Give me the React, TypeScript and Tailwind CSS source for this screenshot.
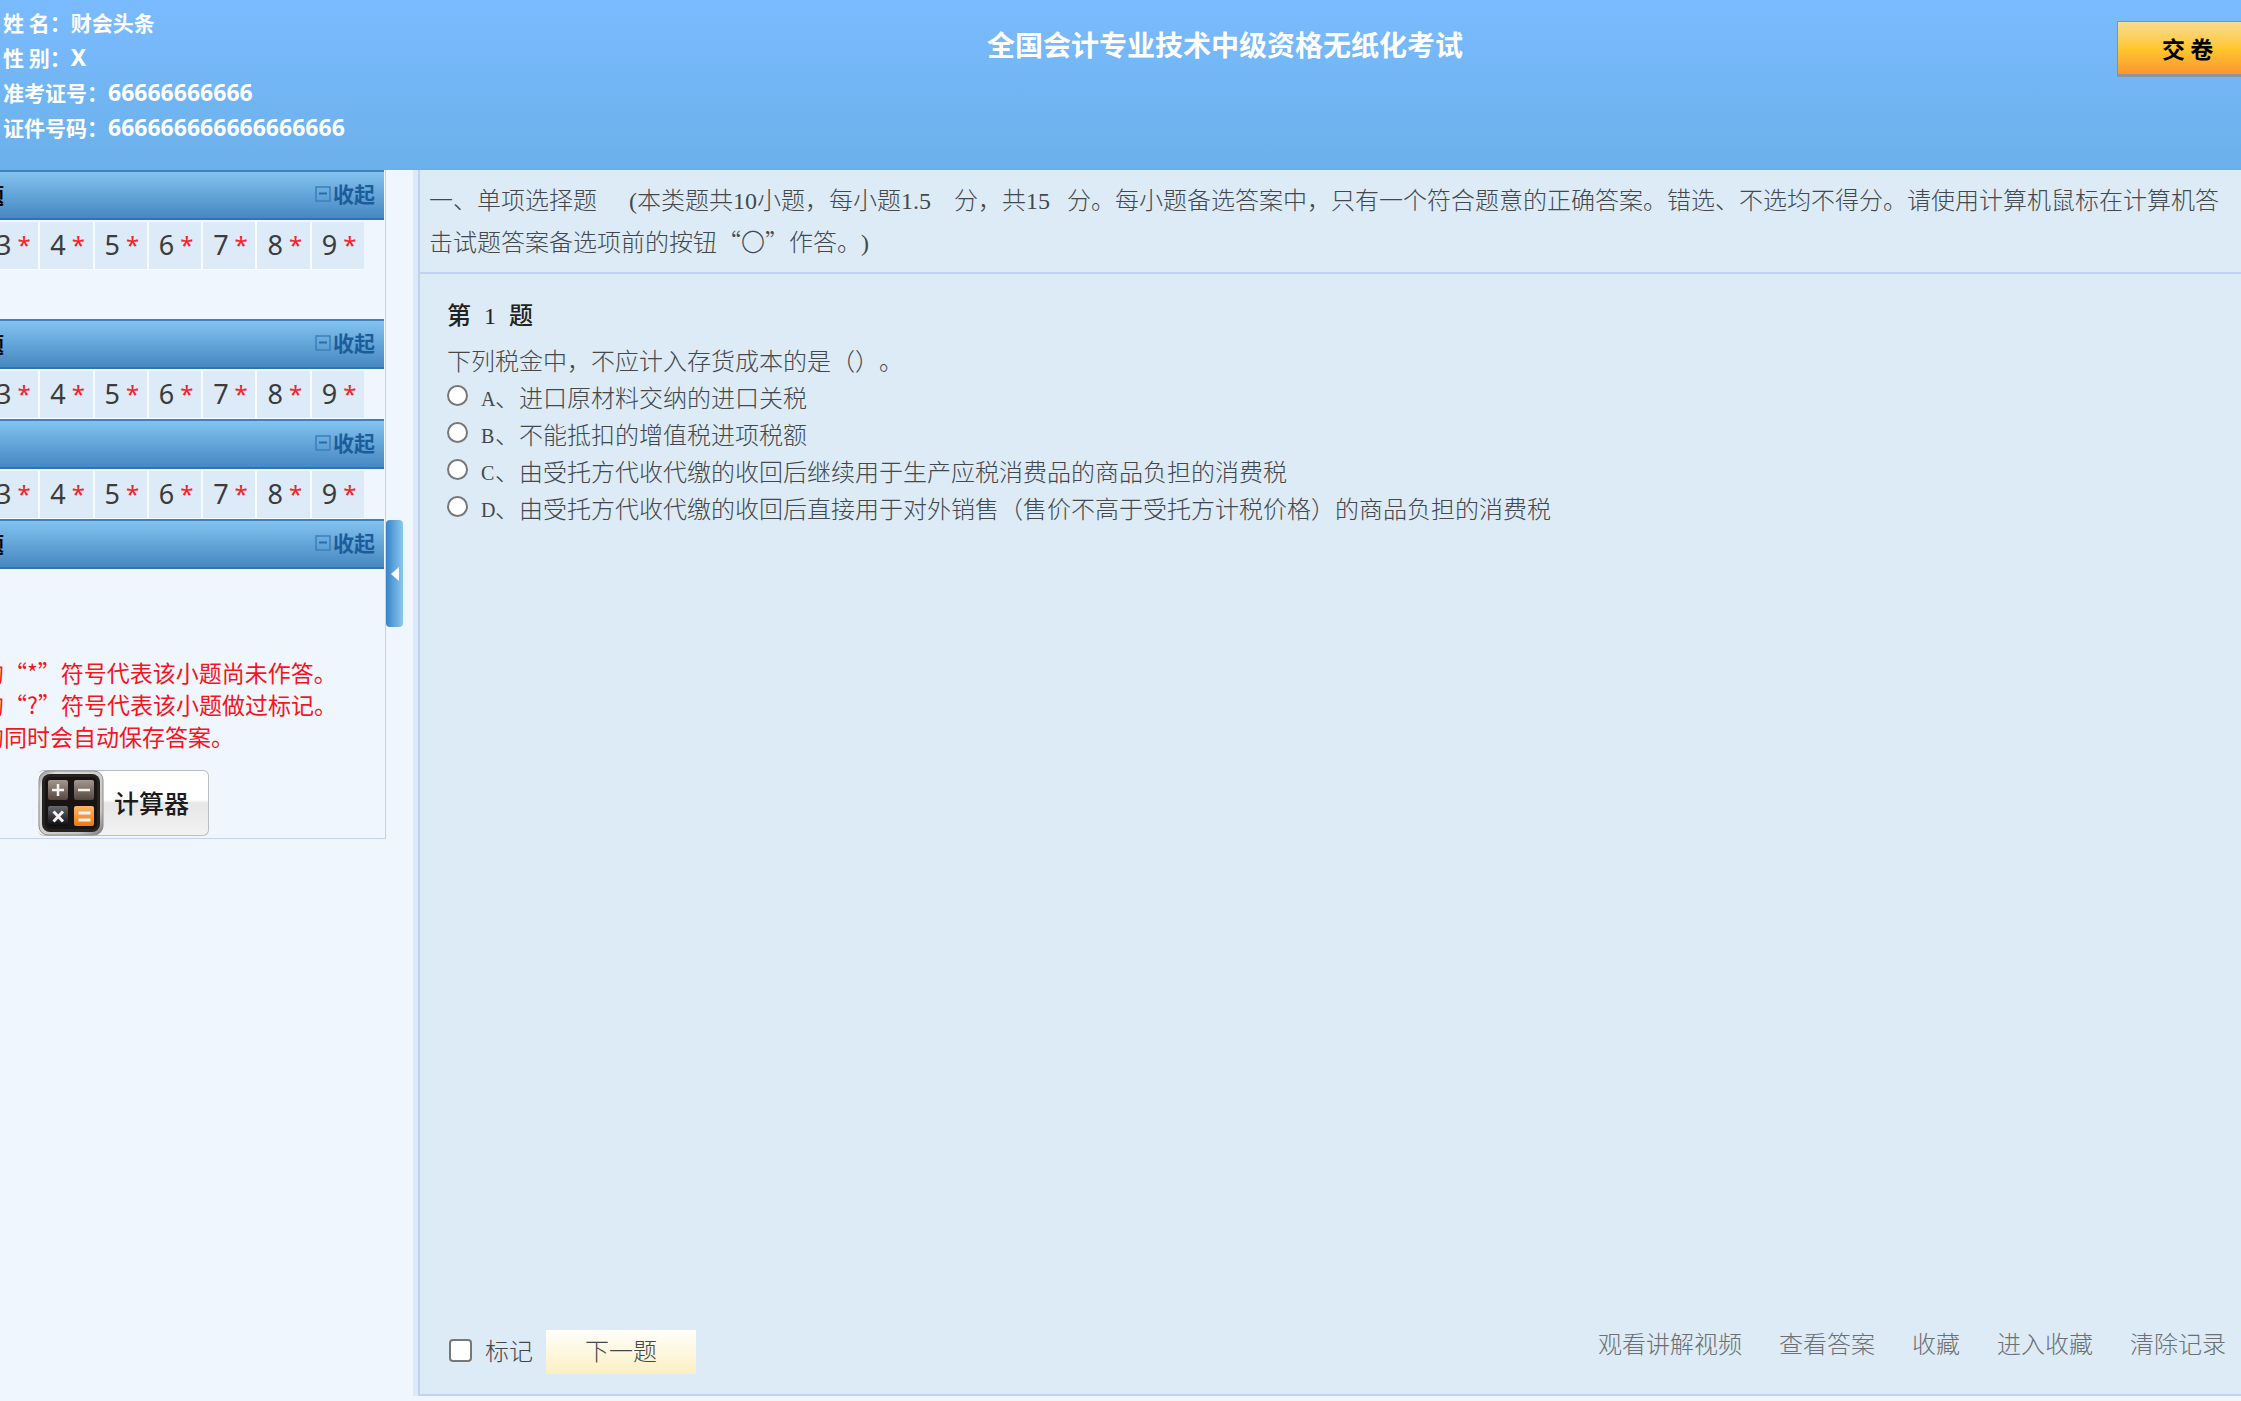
import { useState } from "react";

interface Section {
  id: string;
  title: string;
  numbers: number[];
  spaced?: boolean;
}

const sections: Section[] = [
  { id: "single", title: "题", numbers: [3, 4, 5, 6, 7, 8, 9], spaced: true },
  { id: "multi", title: "题", numbers: [3, 4, 5, 6, 7, 8, 9] },
  { id: "judge", title: "", numbers: [3, 4, 5, 6, 7, 8, 9] },
  { id: "calc", title: "题", numbers: [] },
];

const options = [
  { key: "A", text: "进口原材料交纳的进口关税" },
  { key: "B", text: "不能抵扣的增值税进项税额" },
  { key: "C", text: "由受托方代收代缴的收回后继续用于生产应税消费品的商品负担的消费税" },
  { key: "D", text: "由受托方代收代缴的收回后直接用于对外销售（售价不高于受托方计税价格）的商品负担的消费税" },
];

const links = ["观看讲解视频", "查看答案", "收藏", "进入收藏", "清除记录"];

const MinusBox = () => (
  <svg viewBox="0 0 16 16" className="h-4 w-4" fill="none" stroke="#3a80bb" strokeWidth="1.5" aria-hidden="true">
    <rect x="1" y="1" width="14" height="14" />
    <path d="M4 7.5h8" stroke="#2a6cab" strokeWidth="2" />
  </svg>
);

const CalculatorIcon = () => (
  <svg viewBox="0 0 66 66" className="h-[66px] w-[66px]" aria-hidden="true">
    <defs>
      <linearGradient id="rim" x1="0" y1="0" x2="1" y2="1">
        <stop offset="0" stopColor="#8e8e8e" />
        <stop offset="0.15" stopColor="#dcdcdc" />
        <stop offset="0.8" stopColor="#c4c4c4" />
        <stop offset="1" stopColor="#777" />
      </linearGradient>
      <linearGradient id="brown" x1="0" y1="0" x2="0" y2="1">
        <stop offset="0" stopColor="#a39891" />
        <stop offset="1" stopColor="#55463f" />
      </linearGradient>
      <linearGradient id="dark" x1="0" y1="0" x2="0" y2="1">
        <stop offset="0" stopColor="#66686b" />
        <stop offset="1" stopColor="#0c0d10" />
      </linearGradient>
      <linearGradient id="orange" x1="0" y1="0" x2="0" y2="1">
        <stop offset="0" stopColor="#f9b56c" />
        <stop offset="1" stopColor="#ee7a0c" />
      </linearGradient>
    </defs>
    <rect x="1" y="1" width="64" height="64" rx="9" fill="url(#rim)" stroke="#8a8a8a" />
    <rect x="4" y="4" width="58" height="58" rx="8" fill="#262220" />
    <rect x="7" y="7" width="52" height="52" rx="5" fill="#171413" />
    <rect x="10" y="10" width="20" height="20" rx="2" fill="url(#brown)" />
    <rect x="36" y="10" width="20" height="20" rx="2" fill="url(#brown)" />
    <rect x="10" y="36" width="20" height="20" rx="2" fill="url(#dark)" />
    <rect x="36" y="36" width="20" height="20" rx="2" fill="url(#orange)" />
    <g stroke="#f4f2f0" strokeWidth="2.5" fill="none">
      <path d="M20 14v12M14 20h12M40 20h12" />
      <path d="M15.500 41.500l9.500 10M25 41.500l-9.500 10" strokeWidth="3" />
      <path d="M40.500 43h12M40.500 50h12" strokeWidth="3" />
    </g>
  </svg>
);

function QuestionSection({ section }: { section: Section }) {
  return (
    <section>
      <div className="mr-px flex h-[50px] items-center justify-between border-t-2 border-b-2 border-t-[#3f80bd] border-b-[#2f74b1] bg-linear-to-b from-[#82c3f1] to-[#4688c0] pr-[9px] pb-[2px]">
        {/* 题型名称 */}
        <h2 className="flex w-1 justify-end overflow-hidden text-[22px] font-bold text-black">
          {section.title}
        </h2>
        <button type="button" className="flex items-center gap-[2px] text-[21px] font-bold text-[#1d5c9b]">
          <MinusBox />
          收起
        </button>
      </div>
      {/* 题号 */}
      {section.numbers.length > 0 && (
        <div className={`flex justify-end overflow-hidden pt-[2px] pr-[21px] ${section.spaced ? "pb-[49px]" : "pb-0"}`}>
          <div className="grid w-[378px] shrink-0 grid-cols-7 gap-[2px] border-b border-[#f8fcff] bg-[#f8fcff]">
            {section.numbers.map((n) => (
              <button
                key={n}
                type="button"
                className="flex h-[47px] items-center gap-[6px] bg-[#dcebf7] pl-[10px] font-['Noto_Sans'] text-[27px] text-[#3c3c3c]"
              >
                {n}
                <span className="pb-[2px] text-[24px] text-[#f5232b]">*</span>
              </button>
            ))}
          </div>
        </div>
      )}
    </section>
  );
}

export default function App() {
  const [answer, setAnswer] = useState("");
  const [marked, setMarked] = useState(false);

  return (
    <div
      className="flex min-h-screen flex-col overflow-hidden bg-[#eff6fe] font-['Noto_Sans_CJK_SC',sans-serif] [text-spacing-trim:space-all]"
      lang="zh-CN"
    >
      {/* 顶部:考生信息 + 标题 + 交卷 */}
      <header className="flex items-start bg-linear-to-b from-[#7abbff] to-[#6bb0ea] text-white">
        <div className="w-[345px] pt-[5px] pb-[25px] pl-[3px] text-[21px] leading-[35px] font-bold whitespace-nowrap">
          <p>姓 名：财会头条</p>
          <p>性 别：<span className="font-['Noto_Sans'] text-[23px]">X</span></p>
          <p>准考证号：<span className="font-['Noto_Sans'] text-[23px]">66666666666</span></p>
          <p>证件号码：<span className="font-['Noto_Sans'] text-[23px]">666666666666666666</span></p>
        </div>
        <h1 className="flex-1 pt-[23px] text-center text-[28px] leading-[42px] font-bold">
          全国会计专业技术中级资格无纸化考试
        </h1>
        <div className="flex w-[136px] justify-end pt-[21px]">
          <button
            type="button"
            className="h-14 w-[124px] border border-r-0 border-b-3 border-[#b08a50] border-b-[#8b95a0] bg-linear-to-b from-[#f7dc8c] via-[#ffc72e] to-[#fb9530] pl-11 text-left text-[23px] font-bold text-black"
          >
            交 卷
          </button>
        </div>
      </header>

      <div className="flex flex-1 items-start">
        {/* 左侧题目导航 */}
        <aside className="w-[386px] shrink-0 border-r border-b border-[#c5d0f2]">
          {sections.map((s) => (
            <QuestionSection key={s.id} section={s} />
          ))}
          <div className="overflow-hidden pt-[87px]">
            <div className="-ml-[19px] text-[23px] leading-8 whitespace-nowrap text-[#f5151d]">
              <p>的“*”符号代表该小题尚未作答。</p>
              <p>的“?”符号代表该小题做过标记。</p>
              <p>的同时会自动保存答案。</p>
            </div>
          </div>
          <button
            type="button"
            className="mt-[18px] mb-[2px] ml-[38px] flex h-[66px] w-[171px] items-center gap-[10px] rounded-md border border-l-0 border-[#bcbfc4] bg-linear-to-b from-white from-45% via-[#e6e6e6] via-50% to-[#f2f2f2] text-[25px] font-medium text-[#1c1c1c]"
          >
            <CalculatorIcon />
            计算器
          </button>
        </aside>

        {/* 收起侧栏 */}
        <div className="w-[27px] shrink-0 pt-[350px]">
          <button
            type="button"
            aria-label="收起侧栏"
            className="flex h-[107px] w-[17px] items-center justify-center rounded-[4px] bg-linear-to-r from-[#3884c6] to-[#8ac8f1]"
          >
            <svg viewBox="0 0 8 14" className="h-[14px] w-2" fill="#fff" aria-hidden="true">
              <path d="M8 0v14L0 7z" />
            </svg>
          </button>
        </div>

        <main className="mb-[5px] flex min-w-0 flex-1 flex-col self-stretch border-l-5 border-[#dce9f7] font-['Liberation_Serif','Noto_Sans_CJK_SC',serif] text-[24px] font-light text-[#44484c]">
          <div className="flex flex-1 flex-col border-b-2 border-l-2 border-[#bfd2f1] bg-[#dcebf6]">
            {/* 题型说明 */}
            <div className="border-b-2 border-[#bfd2f1] pt-[10px] pb-2 pl-[9px] leading-[42px] whitespace-nowrap">
              一、单项选择题
              <span className="ml-8">(本类题共10小题，每小题</span>
              <span className="inline-block w-[53px]">1.5</span>
              分，共
              <span className="inline-block w-[41px]">15</span>
              分。每小题备选答案中，只有一个符合题意的正确答案。错选、不选均不得分。请使用计算机鼠标在计算机答
              <br />
              击试题答案备选项前的按钮
              <span className="font-['Noto_Sans_CJK_SC'] leading-none">“〇”</span>
              作答。)
            </div>

            {/* 题目 */}
            <div className="pt-6 pl-[27px]">
              <h3 className="flex gap-[13px] leading-[37px] font-medium text-[#222]">
                <span>第</span>
                <span>1</span>
                <span>题</span>
              </h3>
              <p className="mt-[9px] leading-[37px]">下列税金中，不应计入存货成本的是（）。</p>
              {options.map((o) => (
                <label key={o.key} className="flex h-[37px] items-center leading-[37px]">
                  <input
                    type="radio"
                    name="answer"
                    value={o.key}
                    checked={answer === o.key}
                    onChange={() => setAnswer(o.key)}
                    className="mr-[13px] mb-2 h-[21px] w-[21px] appearance-none rounded-full border-2 border-[#777] bg-white checked:border-6 checked:border-[#2b78d0]"
                  />
                  <span className="w-[14px] text-[20px]">{o.key}</span>
                  <span>、{o.text}</span>
                </label>
              ))}
            </div>

            {/* 底部操作 */}
            <div className="mt-auto flex items-center justify-between pr-[15px] pb-[17px] pl-[29px]">
              <div className="flex items-center">
                <label className="flex items-center gap-[13px]">
                  <input
                    type="checkbox"
                    checked={marked}
                    onChange={(e) => setMarked(e.target.checked)}
                    className="mb-1 h-[23px] w-[23px] appearance-none rounded-[4px] border-2 border-[#777] bg-white checked:bg-[#2b78d0]"
                  />
                  标记
                </label>
                <button
                  type="button"
                  className="ml-[13px] h-11 w-[150px] bg-linear-to-b from-[#fffffb] to-[#fbefc2] text-center"
                >
                  下一题
                </button>
              </div>
              <nav className="mb-[14px] flex gap-[37px] text-[#6c7074]">
                {links.map((l) => (
                  <a key={l} href="#">
                    {l}
                  </a>
                ))}
              </nav>
            </div>
          </div>
        </main>
      </div>
    </div>
  );
}
